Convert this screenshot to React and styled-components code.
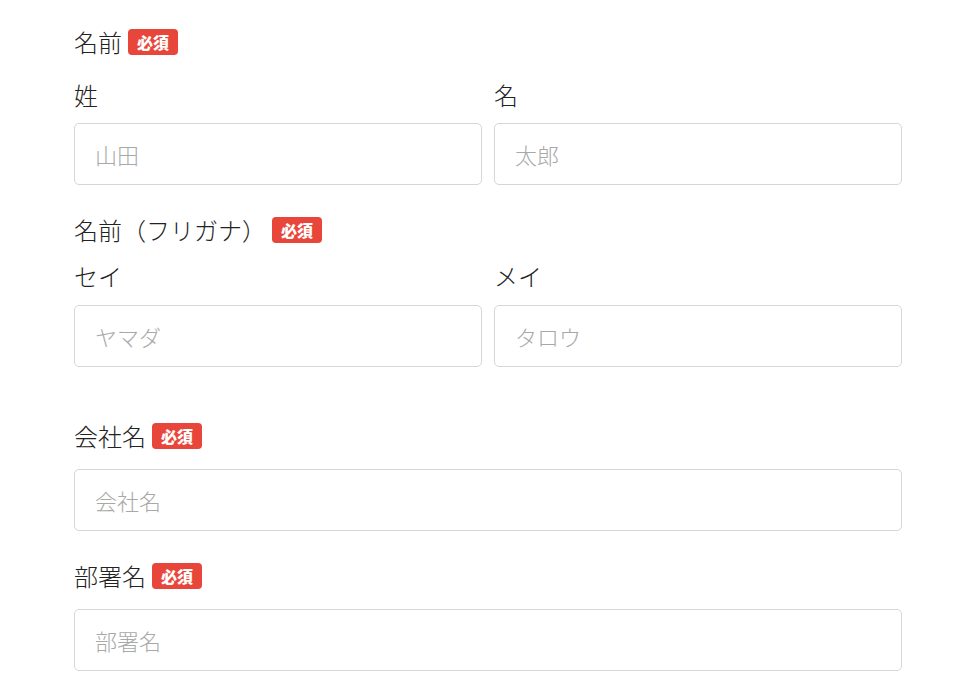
import React from "react";
import styled, { createGlobalStyle } from "styled-components";

const red = "#e8463a";
const text = "#222222";
const jp = `"Noto Sans CJK JP", "Noto Sans", sans-serif`;

const GlobalStyle = createGlobalStyle`
  body {
    margin: 0;
    background: #ffffff;
    font-family: ${jp};
    color: ${text};
  }
`;

export default function App() {
  return (
    <>
      <GlobalStyle />
      <Form>
        <Group>
          <Title>
            名前<Badge>必須</Badge>
          </Title>
          <Pair>
            <Column>
              <SubLabel>姓</SubLabel>
              <Input placeholder="山田" />
            </Column>
            <Column>
              <SubLabel>名</SubLabel>
              <Input placeholder="太郎" />
            </Column>
          </Pair>
        </Group>

        <Group $space={32}>
          <Title>
            名前（フリガナ）<Badge>必須</Badge>
          </Title>
          <Pair $top={18}>
            <Column>
              <SubLabel>セイ</SubLabel>
              <Input $top={14} placeholder="ヤマダ" />
            </Column>
            <Column>
              <SubLabel>メイ</SubLabel>
              <Input $top={14} placeholder="タロウ" />
            </Column>
          </Pair>
        </Group>

        <Group $space={56}>
          <Title>
            会社名<Badge>必須</Badge>
          </Title>
          <Input $top={20} placeholder="会社名" />
        </Group>

        <Group $space={32}>
          <Title>
            部署名<Badge>必須</Badge>
          </Title>
          <Input $top={20} placeholder="部署名" />
        </Group>
      </Form>
    </>
  );
}

const Form = styled.form`
  width: 828px;
  padding: 29px 0 20px 74px;
  display: flex;
  flex-direction: column;
`;

const Group = styled.section`
  margin-top: ${(p) => p.$space || 0}px;
  display: flex;
  flex-direction: column;
`;

const Title = styled.div`
  display: flex;
  align-items: center;
  gap: 6px;
  height: 26px;
  font-size: 24px;
  line-height: 26px;
  font-weight: 300;
  color: ${text};
`;

const Badge = styled.span`
  display: inline-flex;
  align-items: center;
  justify-content: center;
  width: 50px;
  height: 26px;
  border-radius: 4px;
  background: ${red};
  color: #ffffff;
  font-size: 16px;
  font-weight: 900;
  line-height: 1;
`;

const Pair = styled.div`
  display: grid;
  grid-template-columns: 1fr 1fr;
  column-gap: 12px;
  margin-top: ${(p) => p.$top ?? 25}px;
`;

const Column = styled.div`
  display: flex;
  flex-direction: column;
`;

const SubLabel = styled.label`
  font-size: 24px;
  line-height: 30px;
  font-weight: 300;
  color: ${text};
`;

const Input = styled.input`
  box-sizing: border-box;
  width: 100%;
  height: 62px;
  margin-top: ${(p) => p.$top ?? 13}px;
  padding: 0 20px;
  border: 1px solid #d6d6d6;
  border-radius: 5px;
  background: #ffffff;
  font-family: ${jp};
  font-size: 22px;
  font-weight: 300;
  color: ${text};
  outline: none;

  &::placeholder {
    color: #a8a8a8;
  }
`;
